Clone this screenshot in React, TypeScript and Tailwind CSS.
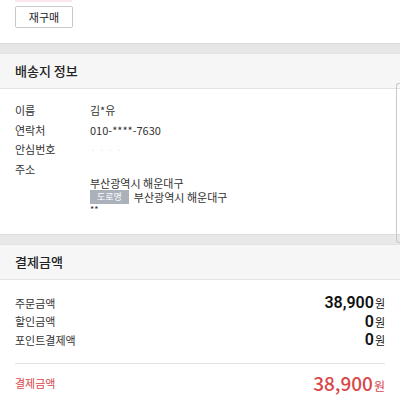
const font = { fontFamily: '"Noto Sans CJK KR", "Noto Sans", sans-serif' };

const InfoRow = ({ label, value }: { label: string; value?: React.ReactNode }) => (
  <div className="flex leading-[19.5px] text-[11px] text-[#333]">
    <div className="w-[75px]">{label}</div>
    <div>{value}</div>
  </div>
);

const PriceRow = ({ label, amount }: { label: string; amount: string }) => (
  <div className="flex items-center justify-between h-[18.5px]">
    <span className="text-[11px] leading-none text-[#333]">{label}</span>
    <span className="text-[#111] leading-none flex items-baseline">
      <span className="text-[16px] leading-none font-semibold font-['Roboto',sans-serif]">{amount}</span>
      <span className="text-[11px] leading-none ml-[1px]">원</span>
    </span>
  </div>
);

export default function App() {
  return (
    <div className="relative w-[400px] h-[400px] overflow-hidden bg-white" style={font}>
      {/* reorder */}
      <div className="px-[15px] pb-[15px]">
        <div className="w-[57px] h-[2px] bg-[#fbe6ec]" />
        <button className="mt-[4px] w-[58px] h-[22px] border border-[#c9c9c9] rounded-[2px] text-[11px] text-[#222] bg-white">
          재구매
        </button>
      </div>

      {/* 배송지 정보 */}
      <div className="h-[10px] bg-[#e6e6e6] border-t border-[#dcdcdc]" />
      <div className="h-[36px] flex items-center px-[15px] bg-[#f6f6f6] border-y border-[#e3e3e3] text-[13px] font-medium text-[#222]">
        배송지 정보
      </div>
      <div className="px-[15px] pt-[12px] pb-[18px]">
        <InfoRow label="이름" value="김*유" />
        <InfoRow label="연락처" value="010-****-7630" />
        <InfoRow label="안심번호" value={<span className="text-[#eeeeee]">· · · ·</span>} />
        <div className="flex text-[11px] text-[#333]">
          <div className="w-[75px] leading-[19.5px]">주소</div>
          <div className="pt-[16.5px] leading-[14px]">
            <div>부산광역시 해운대구</div>
            <div className="flex items-center">
              <span className="bg-[#aab1bb] text-white text-[9px] px-[7px] h-[14px] leading-[14px] mr-[5px]">도로명</span>
              부산광역시 해운대구
            </div>
            <div className="leading-[12px] text-[9px]">**</div>
          </div>
        </div>
      </div>

      {/* 결제금액 */}
      <div className="h-[10px] bg-[#e8e8e8] border-t border-[#dcdcdc]" />
      <div className="h-[36px] flex items-center px-[15px] bg-[#f6f6f6] border-y border-[#e3e3e3] text-[13px] font-medium text-[#222]">
        결제금액
      </div>
      <div className="px-[15px] pt-[14px]">
        <PriceRow label="주문금액" amount="38,900" />
        <PriceRow label="할인금액" amount="0" />
        <PriceRow label="포인트결제액" amount="0" />
        <div className="mt-[13px] border-t border-[#e2e2e2] h-[40px] flex items-center justify-between text-[#d9474a]">
          <span className="text-[11px]">결제금액</span>
          <span className="flex items-baseline">
            <span className="text-[19px] font-medium">38,900</span>
            <span className="text-[12px] ml-[1px]">원</span>
          </span>
        </div>
      </div>

      {/* scrollbar outline */}
      <div className="absolute right-0 top-[83px] w-[4px] h-[160px] border-l border-y border-[#c8c8c8] rounded-l-[3px]" />
    </div>
  );
}
